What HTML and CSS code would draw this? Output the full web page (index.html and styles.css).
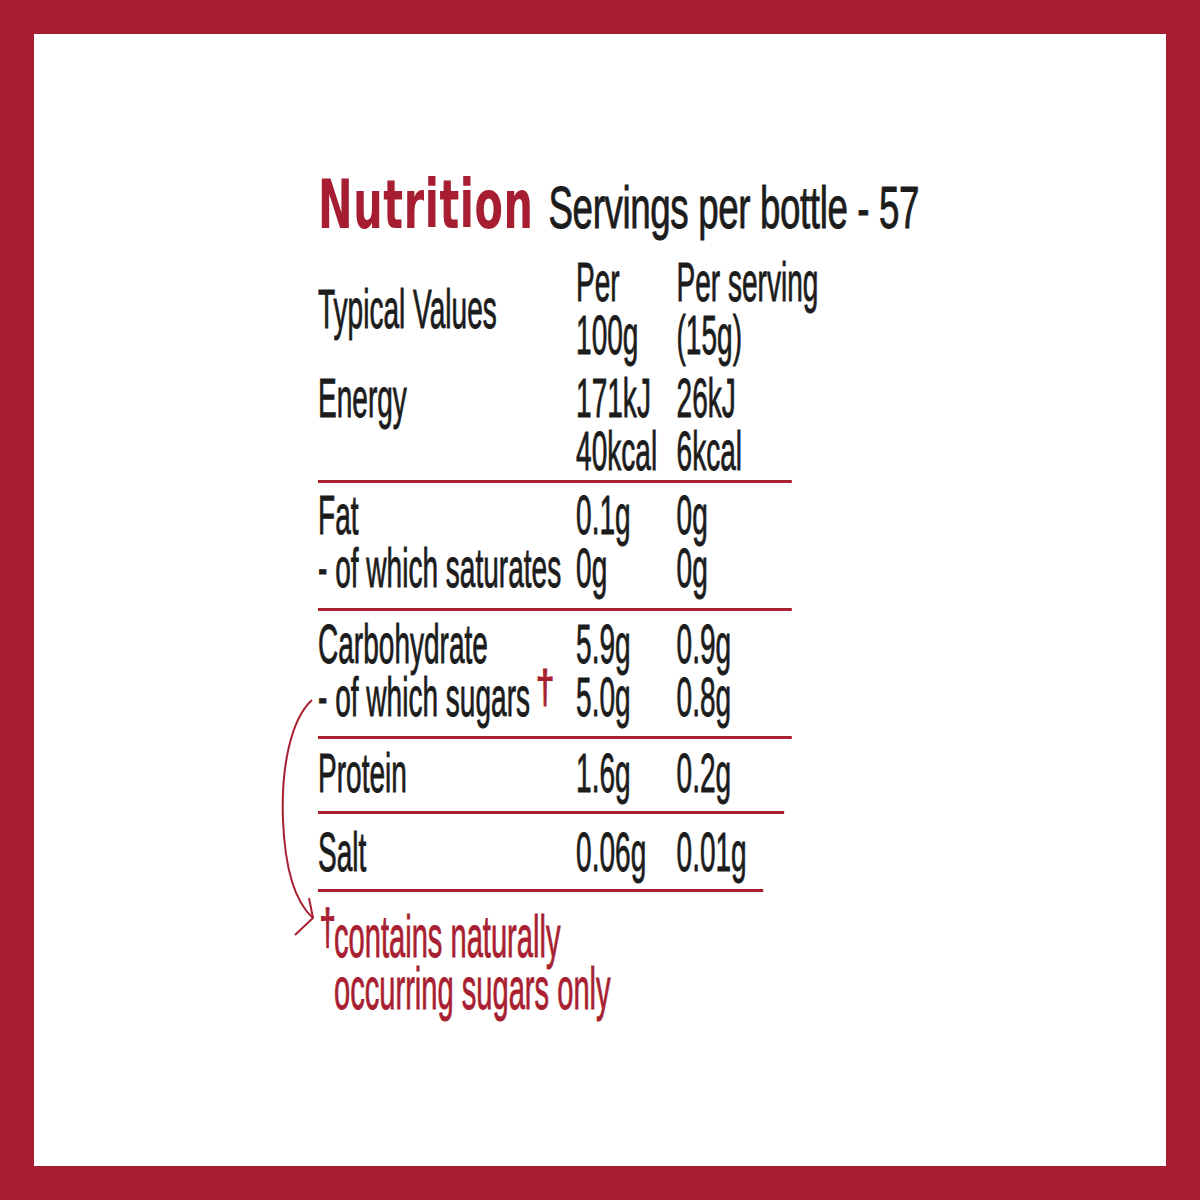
FILE: index.html
```html
<!DOCTYPE html>
<html lang="en">
<head>
<meta charset="utf-8">
<title>Nutrition</title>
<link rel="stylesheet" href="styles.css">
</head>
<body>
<div class="page">
  <div class="content">
    <h1 class="heading"><span class="title">Nutrition</span><span class="servings">Servings per bottle - 57</span></h1>
    <div class="table">
      <div class="group head">
        <div class="label mid">Typical Values</div>
        <div>Per<br>100g</div>
        <div>Per serving<br>(15g)</div>
      </div>
      <div class="group energy w-full">
        <div>Energy</div>
        <div>171kJ<br>40kcal</div>
        <div>26kJ<br>6kcal</div>
      </div>
      <div class="group fat w-full">
        <div>Fat<br>- of which saturates</div>
        <div>0.1g<br>0g</div>
        <div>0g<br>0g</div>
      </div>
      <div class="group carb w-full">
        <div>Carbohydrate<br>- of which sugars <span class="dagger">†</span></div>
        <div>5.9g<br>5.0g</div>
        <div>0.9g<br>0.8g</div>
      </div>
      <div class="group protein w-mid">
        <div>Protein</div>
        <div>1.6g</div>
        <div>0.2g</div>
      </div>
      <div class="group salt w-short">
        <div>Salt</div>
        <div>0.06g</div>
        <div>0.01g</div>
      </div>
    </div>
    <p class="footnote"><span class="fdagger">†</span>contains naturally<br>occurring sugars only</p>
  </div>
  <svg class="arrow" width="60" height="260" viewBox="0 0 60 260" aria-hidden="true">
    <path d="M42 10 C 20 30, 11 80, 13 130 C 15 180, 25 212, 43 228" fill="none" stroke="#a81f31" stroke-width="2"/>
    <path d="M25 245 L43 228 L39 208" fill="none" stroke="#a81f31" stroke-width="2"/>
  </svg>
</div>
</body>
</html>
```
FILE: styles.css
```css
body {
  margin: 0;
  background: #fff;
}

.page {
  position: relative;
  width: 1200px;
  height: 1200px;
  box-sizing: border-box;
  border: 34px solid #a81f31;
  background: #fff;
  overflow: hidden;
}

.content {
  padding: 136px 0 0 284px;
}

.heading {
  display: flex;
  align-items: baseline;
  gap: 24px;
  height: 72px;
  margin: 0;
  white-space: nowrap;
  transform: scaleX(0.617);
  transform-origin: 0 0;
  font-weight: normal;
}

.title {
  font-family: "DejaVu Sans", sans-serif;
  font-weight: 700;
  font-size: 67px;
  line-height: 70px;
  letter-spacing: 1px;
  color: #a71d31;
}

.servings {
  font-family: "Liberation Sans", Arial, sans-serif;
  font-weight: 400;
  font-size: 59.5px;
  line-height: 70px;
  letter-spacing: -0.6px;
  color: #1c1c1c;
  -webkit-text-stroke: 0.9px #1c1c1c;
}

.table {
  margin-top: 14px;
  width: 940px;
  transform: scaleX(0.51);
  transform-origin: 0 0;
  font-family: "Liberation Sans", Arial, sans-serif;
  font-size: 55px;
  line-height: 53px;
  color: #1c1c1c;
  -webkit-text-stroke: 0.9px #1c1c1c;
  white-space: nowrap;
}

.group {
  display: grid;
  grid-template-columns: 506px 197px auto;
  border-bottom: 3px solid #a81f31;
}

.group.head {
  border-bottom: none;
  margin-bottom: 10px;
}

.label.mid {
  align-self: center;
}

.energy { padding: 0 0 2px; }
.fat { padding: 6px 0 13px; }
.carb { padding: 7px 0 12px; }
.protein { padding: 8px 0 11px; }
.salt { padding: 12px 0 10px; }

.w-full { width: 929px; }
.w-mid { width: 914px; }
.w-short { width: 873px; }

.dagger {
  display: inline-block;
  position: relative;
  top: -13px;
  margin-left: -4px;
  font-size: 47px;
  line-height: 0;
  color: #a81f31;
  -webkit-text-stroke: 1.2px #a81f31;
  transform: scaleX(1.4);
  transform-origin: 0 0;
}

.footnote {
  margin: 19px 0 0;
  width: 700px;
  padding-left: 33px;
  text-indent: -30px;
  transform: scaleX(0.485);
  transform-origin: 0 0;
  font-family: "Liberation Sans", Arial, sans-serif;
  font-size: 60px;
  line-height: 52px;
  color: #a81f31;
  -webkit-text-stroke: 0.9px #a81f31;
  white-space: nowrap;
}

.fdagger {
  display: inline-block;
  width: 30px;
  text-indent: 0;
  position: relative;
  top: -13px;
  font-size: 50px;
  line-height: 0;
  -webkit-text-stroke: 1.4px #a81f31;
  transform: scaleX(1.2);
  transform-origin: 0 0;
}

.arrow {
  position: absolute;
  left: 236px;
  top: 656px;
}
```
